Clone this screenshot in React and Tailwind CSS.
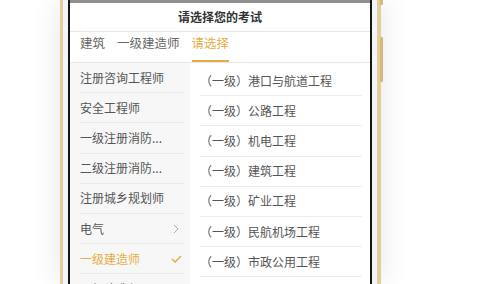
import React from "react";

const leftItems = [
  { t: "注册咨询工程师" },
  { t: "安全工程师" },
  { t: "一级注册消防..." },
  { t: "二级注册消防..." },
  { t: "注册城乡规划师" },
  { t: "电气", chevron: true },
  { t: "一级建造师", active: true },
  { t: "二级建造师" },
];

const rightItems = [
  "（一级）港口与航道工程",
  "（一级）公路工程",
  "（一级）机电工程",
  "（一级）建筑工程",
  "（一级）矿业工程",
  "（一级）民航机场工程",
  "（一级）市政公用工程",
  "（一级）水利水电工程",
];

export default function App() {
  return (
    <div
      className="w-[486px] h-[284px] overflow-hidden bg-white flex"
      style={{ fontFamily: '"Noto Sans CJK SC", "Noto Sans", sans-serif' }}
    >
      <div className="relative ml-[60px] w-[321px] h-[284px] shrink-0 border-l-[3px] border-r-[4px] border-[#e4cd9c] bg-[#f3f6f9] px-[5px] shadow-[0_0_28px_rgba(0,0,0,0.10)]">
        <div className="absolute right-[-6px] top-0 w-[3px] h-[5px] rounded-b-[1px] bg-[#d6b77c]" />
        <div className="absolute right-[-6px] top-[37px] w-[3px] h-[45px] rounded-[1px] bg-[#d6b77c]" />
        <div className="h-full border-x-2 border-[#151515] bg-white flex flex-col overflow-hidden">
          <div className="h-[3px] shrink-0 bg-[#8f8f8f]" />
          <div className="h-[29px] shrink-0 flex items-center justify-center border-b border-[#e6e6e6] text-[12px] font-semibold text-[#333]">
            请选择您的考试
          </div>
          <div className="h-[31px] shrink-0 flex gap-[12px] px-[10px] border-b border-[#e8e8e8] text-[12.5px]">
            <div className="flex items-center pb-[5px] border-b-2 border-transparent text-[#666]">建筑</div>
            <div className="flex items-center pb-[5px] border-b-2 border-transparent text-[#666]">一级建造师</div>
            <div className="flex items-center pb-[5px] border-b-2 border-[#e7ad45] text-[#e7ad45]">请选择</div>
          </div>
          <div className="flex flex-1 min-h-0">
            <div className="w-[120px] shrink-0 bg-[#f7f7f7] flex flex-col">
              {leftItems.map((it, i) => (
                <div
                  key={i}
                  className="h-[30.2px] shrink-0 ml-[10px] mr-[6px] pr-[2px] border-b border-[#e9e9e9] flex items-center justify-between text-[12px]"
                >
                  <span className={it.active ? "text-[#e7ad45]" : "text-[#555]"}>{it.t}</span>
                  {it.chevron && (
                    <svg width="6" height="10" viewBox="0 0 6 10" className="mr-[3px]">
                      <path d="M1 1l4 4-4 4" fill="none" stroke="#aaa" strokeWidth="1" />
                    </svg>
                  )}
                  {it.active && (
                    <svg width="11" height="8" viewBox="0 0 11 8">
                      <path d="M1 4l3.2 3L10 1" fill="none" stroke="#e7ad45" strokeWidth="1.4" />
                    </svg>
                  )}
                </div>
              ))}
            </div>
            <div className="flex-1 flex flex-col pt-[3px]">
              {rightItems.map((t, i) => (
                <div
                  key={i}
                  className="h-[30.2px] shrink-0 ml-[10px] mr-[8px] border-b border-[#ececec] flex items-center text-[12px] text-[#555]"
                >
                  {t}
                </div>
              ))}
            </div>
          </div>
        </div>
      </div>
    </div>
  );
}
